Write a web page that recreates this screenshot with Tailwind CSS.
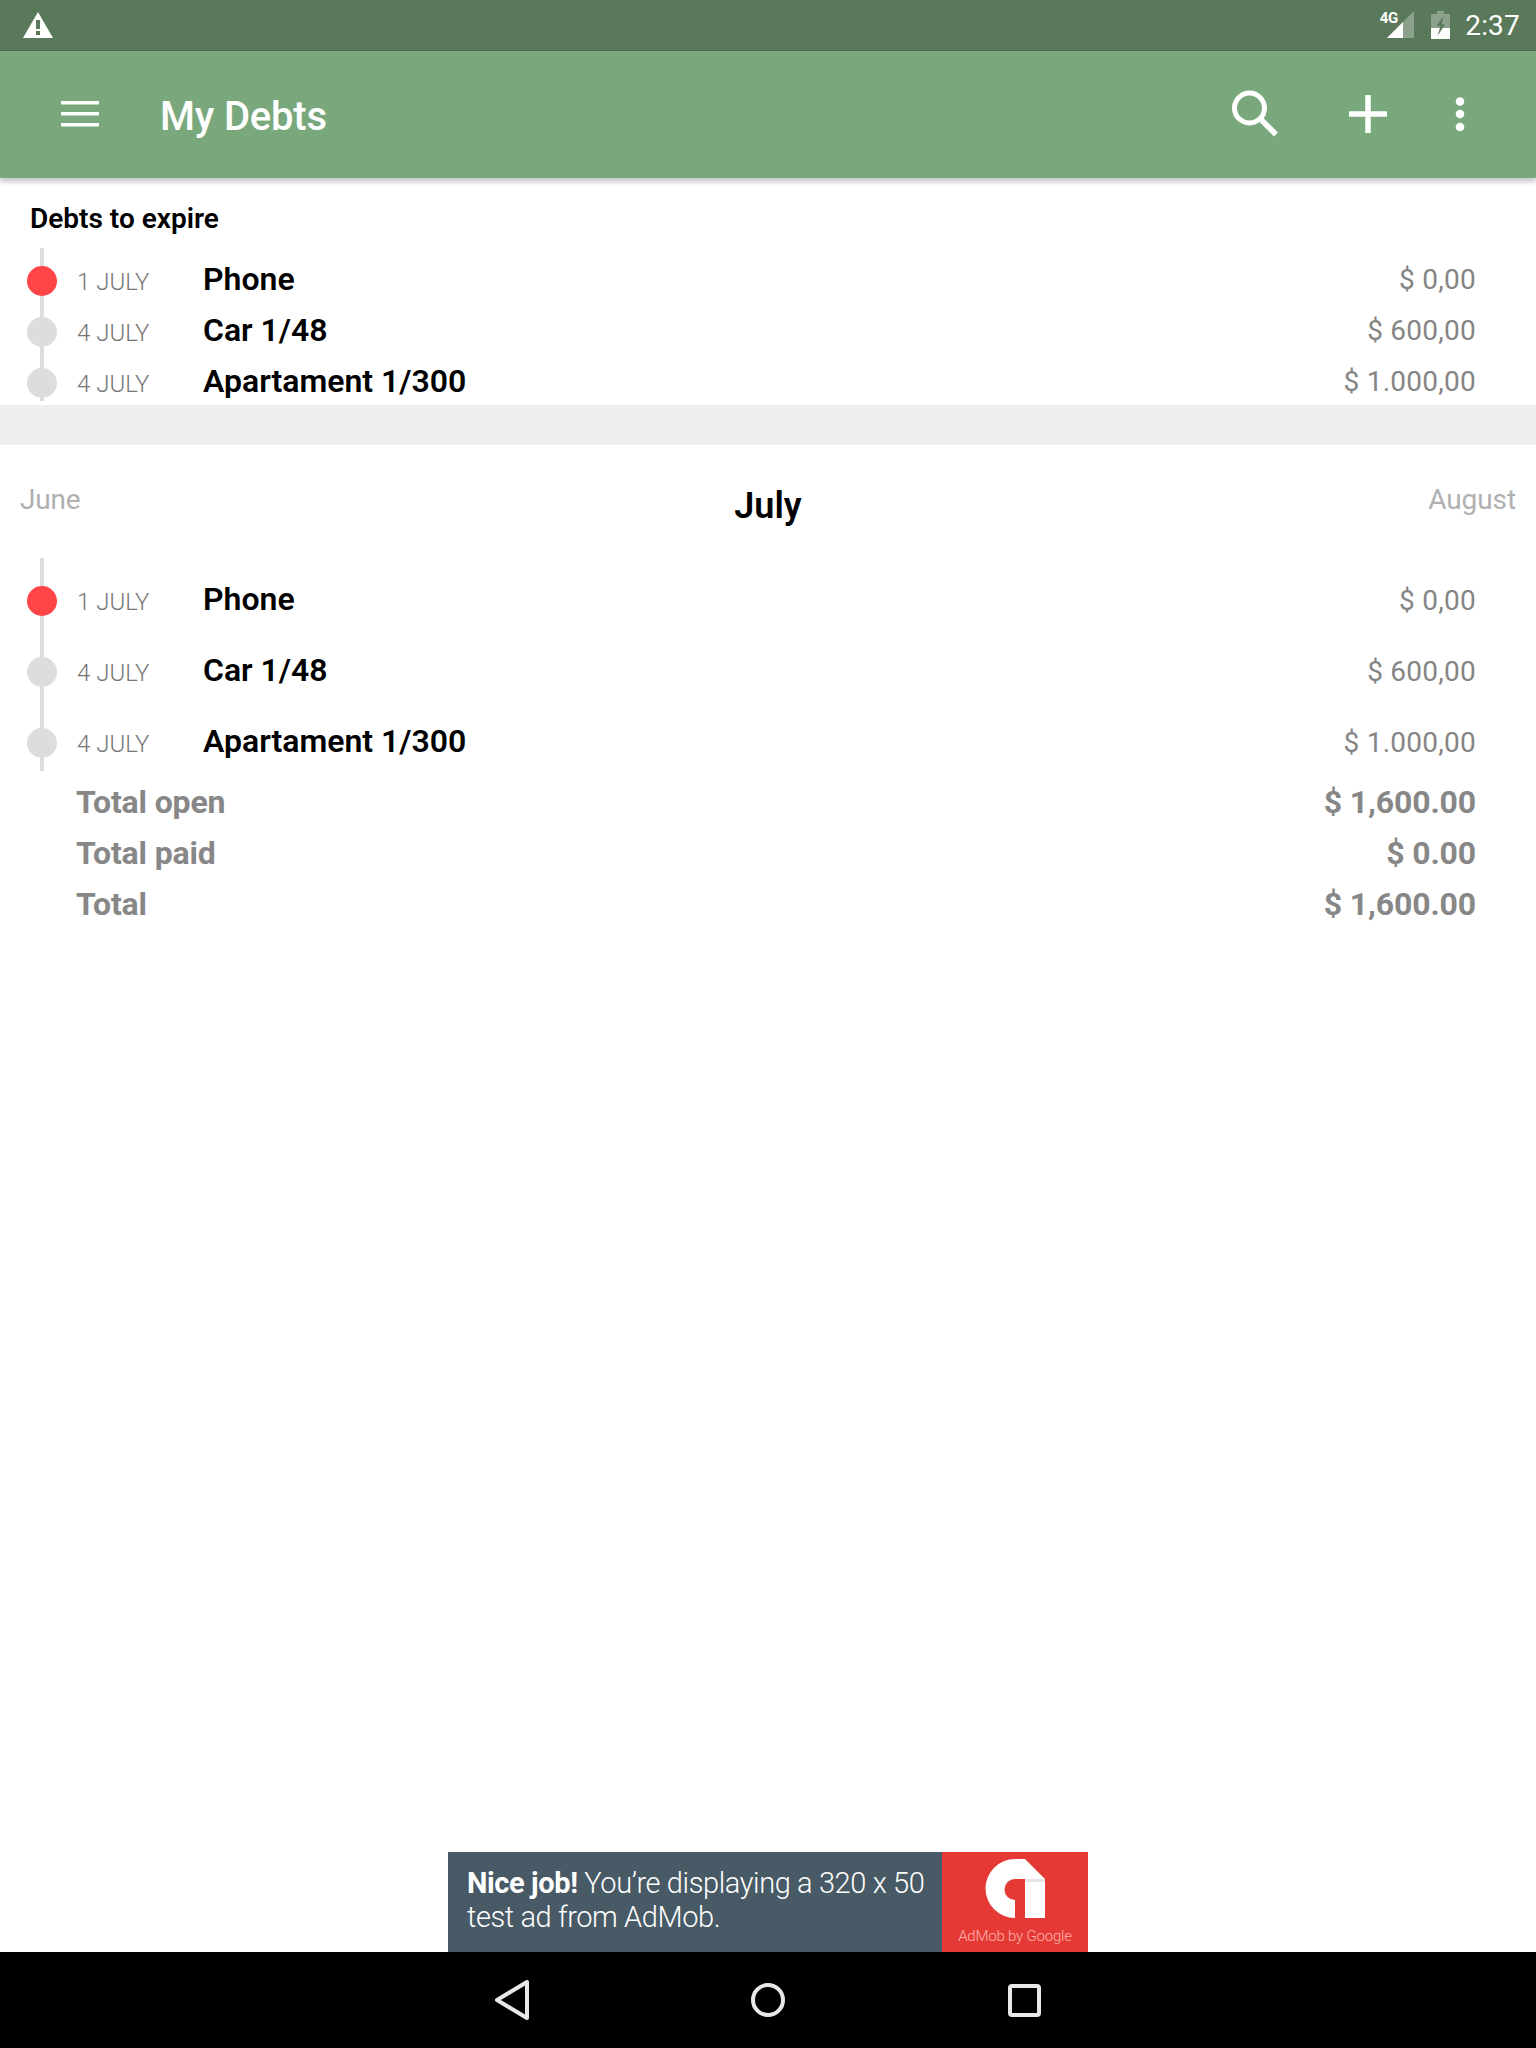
<!DOCTYPE html>
<html><head><meta charset="utf-8">
<script src="https://cdn.jsdelivr.net/npm/@tailwindcss/browser@4"></script>
</head>
<body class="m-0 bg-white">
<div class="w-[1536px] h-[2048px] flex flex-col font-['Roboto',sans-serif] overflow-hidden">
  <div class="h-[50px] shrink-0 bg-[#5a795b] flex items-center pl-[22px] pr-[16px] text-white">
    <svg width="32" height="28" viewBox="0 0 32 28" class="mt-[-1px]"><path fill="#fff" d="M16 1 L31 27 H1 Z"/><rect x="14" y="9" width="4" height="9" fill="#5a795b"/><rect x="14" y="20" width="4" height="4" fill="#5a795b"/></svg>
    <div class="ml-auto flex items-center">
      <div class="relative w-[28px] h-[28px] mr-[16px]">
        <svg width="28" height="28" viewBox="0 0 28 28" class="absolute left-0 top-0"><path fill="#fff" fill-opacity=".3" d="M27 0 V27 H0 Z"/><path fill="#fff" d="M16 11 V27 H0 Z"/></svg>
        <span class="absolute left-[-7.500px] top-[-1px] text-[15px] leading-[16px] font-bold tracking-[-0.3px]">4G</span>
      </div>
      <svg width="19" height="28" viewBox="0 0 19 28" class="mr-[15px]"><path fill="#fff" fill-opacity=".3" d="M6 0 H13 V3 H19 V28 H0 V3 H6 Z"/><path fill="#fff" d="M0 17 H19 V28 H0 Z"/><path fill="#5a795b" d="M12.500 5 L5.500 15 H9.500 L6.500 25 L14 13.500 H10.500 Z"/></svg>
      <span class="text-[28px] leading-[34px] mt-[1px] tracking-[0.2px]">2:37</span>
    </div>
  </div>
  <div class="relative h-[128px] shrink-0 bg-[#7aa87d] shadow-[0_4px_5px_rgba(0,0,0,0.22)] border-t border-t-[#4f6b50] flex items-center text-white z-10">
    <svg width="38" height="26" viewBox="0 0 38 26" class="ml-[61px] mt-[-2px]"><rect y="0" width="38" height="3.500" fill="#fff"/><rect y="11" width="38" height="3.500" fill="#fff"/><rect y="22" width="38" height="3.500" fill="#fff"/></svg>
    <span class="ml-[61px] text-[40px] leading-[48px] font-medium mt-[4px] tracking-[-0.2px]">My Debts</span>
    <svg width="48" height="48" viewBox="0 0 48 48" class="ml-auto mt-[-3px]"><circle cx="19.500" cy="19" r="15" fill="none" stroke="#fff" stroke-width="5"/><path d="M30.500 30 L46 45.500" stroke="#fff" stroke-width="5.500" fill="none"/></svg>
    <svg width="38" height="38" viewBox="0 0 38 38" class="ml-[71px] mt-[-2px]"><path d="M19 0 V38 M0 19 H38" stroke="#fff" stroke-width="5.500" fill="none"/></svg>
    <svg width="10" height="34" viewBox="0 0 10 34" class="ml-[68px] mr-[71px] mt-[-1px]"><circle cx="5" cy="4.500" r="4.300" fill="#fff"/><circle cx="5" cy="17" r="4.300" fill="#fff"/><circle cx="5" cy="30" r="4.300" fill="#fff"/></svg>
  </div>

  <div class="h-[227px] shrink-0 relative">
    <div class="pl-[30px] pt-[21px] text-[28px] leading-[40px] font-semibold text-black">Debts to expire</div>
    <div class="absolute left-[40px] top-[70px] w-[4px] h-[153px] bg-[#dddddd]"></div>
    <div class="absolute left-0 right-0 top-[77px] flex flex-col">
      <div class="relative h-[51px] flex items-center">
        <div class="w-[30px] h-[30px] ml-[27px] rounded-full bg-[#ff4545] shrink-0"></div>
        <span class="w-[126px] ml-[20px] text-[24px] font-light text-[#777777] mt-[2px] shrink-0">1 JULY</span>
        <span class="text-[32px] font-semibold text-black mt-[-4px]">Phone</span>
        <span class="ml-auto mr-[60px] text-[28px] tracking-[0.25px] text-[#858585] mt-[-1px]">$ 0,00</span>
      </div>
      <div class="relative h-[51px] flex items-center">
        <div class="w-[30px] h-[30px] ml-[27px] rounded-full bg-[#dddddd] shrink-0"></div>
        <span class="w-[126px] ml-[20px] text-[24px] font-light text-[#777777] mt-[2px] shrink-0">4 JULY</span>
        <span class="text-[32px] font-semibold text-black mt-[-4px]">Car 1/48</span>
        <span class="ml-auto mr-[60px] text-[28px] tracking-[0.25px] text-[#858585] mt-[-1px]">$ 600,00</span>
      </div>
      <div class="relative h-[51px] flex items-center">
        <div class="w-[30px] h-[30px] ml-[27px] rounded-full bg-[#dddddd] shrink-0"></div>
        <span class="w-[126px] ml-[20px] text-[24px] font-light text-[#777777] mt-[2px] shrink-0">4 JULY</span>
        <span class="text-[32px] font-semibold text-black mt-[-4px]">Apartament 1/300</span>
        <span class="ml-auto mr-[60px] text-[28px] tracking-[0.25px] text-[#858585] mt-[-1px]">$ 1.000,00</span>
      </div>
    </div>
  </div>
  <div class="h-[40px] shrink-0 bg-[#eeeeee]"></div>

  <div class="relative flex-1">
    <div class="grid grid-cols-3 items-start px-[20px] pt-[39px] h-[113px]">
      <span class="text-[28px] leading-[32px] text-[#b0b0b0] tracking-[-0.2px]">June</span>
      <span class="text-[36px] leading-[42px] font-semibold text-black text-center mt-[1px]">July</span>
      <span class="text-[28px] leading-[32px] text-[#b0b0b0] text-right tracking-[-0.1px]">August</span>
    </div>
    <div class="absolute left-[40px] top-[113px] w-[4px] h-[213px] bg-[#dddddd]"></div>
    <div class="absolute left-0 right-0 top-[120px] flex flex-col">
      <div class="h-[71px] flex items-center">
        <div class="w-[30px] h-[30px] ml-[27px] rounded-full bg-[#ff4545] shrink-0"></div>
        <span class="w-[126px] ml-[20px] text-[24px] font-light text-[#777777] mt-[2px] shrink-0">1 JULY</span>
        <span class="text-[32px] font-semibold text-black mt-[-3px]">Phone</span>
        <span class="ml-auto mr-[60px] text-[28px] tracking-[0.25px] text-[#858585]">$ 0,00</span>
      </div>
      <div class="h-[71px] flex items-center">
        <div class="w-[30px] h-[30px] ml-[27px] rounded-full bg-[#dddddd] shrink-0"></div>
        <span class="w-[126px] ml-[20px] text-[24px] font-light text-[#777777] mt-[2px] shrink-0">4 JULY</span>
        <span class="text-[32px] font-semibold text-black mt-[-3px]">Car 1/48</span>
        <span class="ml-auto mr-[60px] text-[28px] tracking-[0.25px] text-[#858585]">$ 600,00</span>
      </div>
      <div class="h-[71px] flex items-center">
        <div class="w-[30px] h-[30px] ml-[27px] rounded-full bg-[#dddddd] shrink-0"></div>
        <span class="w-[126px] ml-[20px] text-[24px] font-light text-[#777777] mt-[2px] shrink-0">4 JULY</span>
        <span class="text-[32px] font-semibold text-black mt-[-3px]">Apartament 1/300</span>
        <span class="ml-auto mr-[60px] text-[28px] tracking-[0.25px] text-[#858585]">$ 1.000,00</span>
      </div>
      <div class="h-[51px] mt-[-2px] flex items-center justify-between pl-[76px] pr-[60px] text-[32px] font-bold text-[#878787] tracking-[-0.15px]"><span>Total open</span><span>$ 1,600.00</span></div>
      <div class="h-[51px] flex items-center justify-between pl-[76px] pr-[60px] text-[32px] font-bold text-[#878787] tracking-[-0.15px]"><span>Total paid</span><span>$ 0.00</span></div>
      <div class="h-[51px] flex items-center justify-between pl-[76px] pr-[60px] text-[32px] font-bold text-[#878787] tracking-[-0.15px]"><span>Total</span><span>$ 1,600.00</span></div>
    </div>
    <div class="absolute bottom-0 left-[448px] w-[640px] h-[100px] flex">
      <div class="w-[494px] bg-[#485a65] text-white font-light text-[29px] leading-[34px] pl-[19px] pt-[14px] tracking-[-0.4px]"><b class="font-bold">Nice job!</b> You’re displaying a 320 x 50<br>test ad from AdMob.</div>
      <div class="w-[146px] bg-[#e53935] flex flex-col items-center">
        <svg width="60" height="59" viewBox="0 0 60 59" class="mt-[7px]"><path fill="#fff" d="M30 0 H40 L60 20 V59 H40 V20 H30 A10.500 10.500 0 0 0 30 41 V59 A29.500 29.500 0 0 1 30 0 Z"/><rect x="40" y="20" width="20" height="3" fill="#e4e4e4"/></svg>
        <span class="mt-[9px] text-[15px] leading-[18px] font-light text-[#ffb3ad] tracking-[-0.2px] whitespace-nowrap">AdMob by Google</span>
      </div>
    </div>
  </div>

  <div class="h-[96px] shrink-0 bg-black flex items-center justify-center gap-[192px]">
    <svg width="64" height="64" viewBox="0 0 64 64"><path d="M47 14 V50 L17 32 Z" fill="none" stroke="#e8e8e8" stroke-width="4" stroke-linejoin="round"/></svg>
    <svg width="64" height="64" viewBox="0 0 64 64"><circle cx="32" cy="32" r="15" fill="none" stroke="#e8e8e8" stroke-width="4"/></svg>
    <svg width="64" height="64" viewBox="0 0 64 64"><rect x="18" y="18" width="29" height="29" rx="2" fill="none" stroke="#e8e8e8" stroke-width="4"/></svg>
  </div>
</div>
</body></html>
